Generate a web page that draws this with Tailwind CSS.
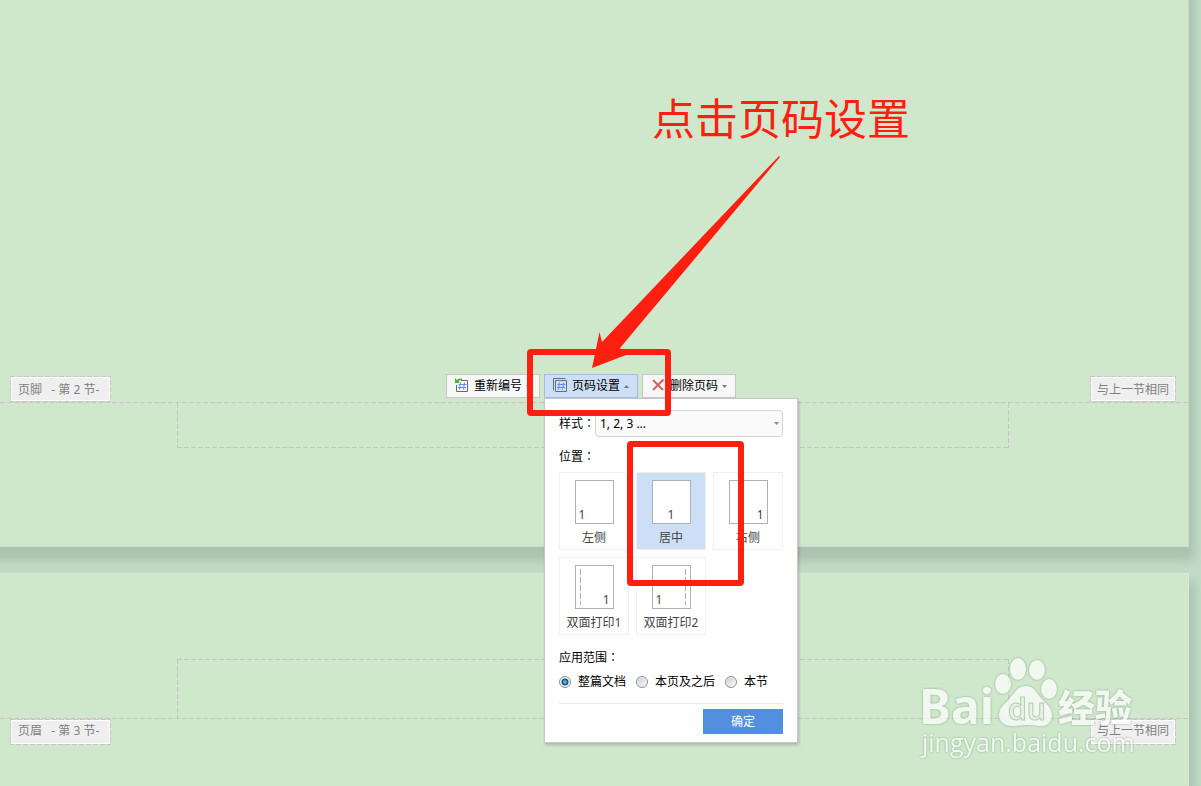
<!DOCTYPE html>
<html lang="zh-CN">
<head>
    <meta charset="UTF-8">
    <meta name="viewport" content="width=device-width, initial-scale=1.0">
    <title>页码设置</title>
    <script src="https://cdn.jsdelivr.net/npm/@tailwindcss/browser@4"></script>
</head>
<body class="bg-[#c2dcc7] font-['Noto_Sans','Noto_Sans_CJK_SC',sans-serif] text-xs text-black">
    <main class="relative flex min-h-screen flex-col overflow-hidden">

        <!-- Section 2 page, footer area -->
        <section class="-mt-6 -ml-6 mr-3 flex h-[571px] flex-col justify-end border-r border-b border-[#cfd8cf] bg-[#cfe8cc] pl-6 shadow-[6px_14px_10px_#abc2af]">
            <div class="grid grid-cols-[1fr_auto_1fr] items-end pr-3 pl-2.5">
                <div class="relative h-[26px] w-[101px] p-px">
                    <div class="h-full border border-white bg-[#efefef] px-1.5 leading-[23px] whitespace-pre text-[#808080]">页脚   - 第 2 节-</div>
                    <svg class="absolute inset-0 h-full w-full" fill="none" stroke="#c8c4c8" stroke-width="2" stroke-dasharray="5 2"><rect width="100%" height="100%" /></svg>
                </div>

                <!-- Page number toolbar -->
                <div class="mr-1 mb-1 flex gap-1">
                    <button class="flex h-6 w-[94px] items-center border border-[#c6c6c6] bg-[#f7f7f7] pl-[7px]">
                        <svg class="h-4 w-4" viewBox="0 0 16 16" fill="none">
                            <path d="M7 2.500h6.500v11h-11V7" stroke="#6b6b6b" />
                            <path d="M6.500 4.500l-1 7M10.500 4.500l-1 7M4.500 6.500h8M4 9.500h8" stroke="#5b8fe8" />
                            <path d="M1 0v5h5L4.500 3.500C5.500 2.300 6.500 2 8 2V.5C6 .5 4.500.8 3 2z" fill="#4caf2a" />
                        </svg>
                        <span class="ml-1">重新编号</span>
                        <svg class="ml-1 h-[3px] w-[5px]" viewBox="0 0 5 3" fill="#777"><path d="M0 0h5L2.500 3z" /></svg>
                    </button>
                    <div class="relative">
                        <button class="flex h-6 w-[94px] items-center border border-[#a3bfe8] bg-[#cddff7] pl-[7px]" aria-expanded="true">
                            <svg class="h-4 w-4" viewBox="0 0 16 16" fill="none">
                                <path d="M1.500 12.500v-12h12" stroke="#6b6b6b" />
                                <path d="M3.500 2.500h11v11h-11z" stroke="#6b6b6b" />
                                <path d="M7.500 4.500l-1 7M11.500 4.500l-1 7M5.500 6.500h8M5 9.500h8" stroke="#5b8fe8" />
                            </svg>
                            <span class="ml-1">页码设置</span>
                            <svg class="ml-1 h-[3px] w-[5px]" viewBox="0 0 5 3" fill="#777"><path d="M0 3h5L2.500 0z" /></svg>
                        </button>

                        <!-- Settings dropdown -->
                        <form class="absolute top-full left-0 z-10 w-[254px] border border-[#c6c6c6] bg-white px-3.5 pt-[11px] pb-2 shadow-[1px_2px_3px_#0003]">
                            <div class="flex items-center">
                                <label for="style" class="w-9 shrink-0 whitespace-nowrap">样式<span lang="zh-TW" class="font-['Noto_Sans_CJK_TC',sans-serif]">：</span></label>
                                <div class="relative flex-1">
                                    <select id="style" class="block h-[27px] w-full appearance-none rounded border border-[#d4d4d4] bg-[#fafafa] px-1">
                                        <option>1, 2, 3 ...</option>
                                    </select>
                                    <svg class="pointer-events-none absolute top-3 right-1 h-[3px] w-[5px]" viewBox="0 0 5 3" fill="#888"><path d="M0 0h5L2.500 3z" /></svg>
                                </div>
                            </div>

                            <p class="mt-2.5 leading-[18px]">位置<span lang="zh-TW" class="font-['Noto_Sans_CJK_TC',sans-serif]">：</span></p>
                            <div class="mt-1.5 grid grid-cols-3 gap-[7px] text-[#444]">
                                <button type="button" class="flex h-[78px] flex-col items-center border border-[#efefef] pt-[7px]">
                                    <span class="flex h-11 w-[39px] items-end border border-[#b0b0b0] bg-white px-[3px] leading-4">1</span>
                                    <span class="mt-1 leading-5">左侧</span>
                                </button>
                                <button type="button" class="flex h-[78px] flex-col items-center border border-[#efefef] bg-[#cddff7] pt-[7px]">
                                    <span class="flex h-11 w-[39px] items-end justify-center border border-[#b0b0b0] bg-white px-[3px] leading-4">1</span>
                                    <span class="mt-1 leading-5">居中</span>
                                </button>
                                <button type="button" class="flex h-[78px] flex-col items-center border border-[#efefef] pt-[7px]">
                                    <span class="flex h-11 w-[39px] items-end justify-end border border-[#b0b0b0] bg-white px-[3px] leading-4">1</span>
                                    <span class="mt-1 leading-5">右侧</span>
                                </button>
                                <button type="button" class="flex h-[78px] flex-col items-center border border-[#efefef] pt-[7px]">
                                    <span class="flex h-11 w-[39px] items-end justify-between border border-[#b0b0b0] bg-white px-[3px] leading-4">
                                        <svg class="mb-[3px] h-9 w-[3px]" stroke="#b0b0b0" stroke-dasharray="6 2"><path d="M1.500 0v36" /></svg>1
                                    </span>
                                    <span class="mt-1 leading-5">双面打印1</span>
                                </button>
                                <button type="button" class="flex h-[78px] flex-col items-center border border-[#efefef] pt-[7px]">
                                    <span class="flex h-11 w-[39px] items-end justify-between border border-[#b0b0b0] bg-white px-[3px] leading-4">
                                        1<svg class="mb-[3px] h-9 w-[3px]" stroke="#b0b0b0" stroke-dasharray="6 2"><path d="M1.500 0v36" /></svg>
                                    </span>
                                    <span class="mt-1 leading-5">双面打印2</span>
                                </button>
                            </div>

                            <fieldset class="mt-[13px]">
                                <legend class="leading-[18px]">应用范围<span lang="zh-TW" class="font-['Noto_Sans_CJK_TC',sans-serif]">：</span></legend>
                                <div class="mt-1.5 flex gap-2.5 leading-[18px] whitespace-nowrap">
                                    <label class="flex items-center gap-[7px]">
                                        <input type="radio" name="range" checked class="h-3 w-3 appearance-none rounded-full border border-[#8e8f8f] bg-[#eee] bg-[radial-gradient(circle,#4db8e8_0_1px,#12456b_3px,#f4f4f4_4px)]">整篇文档
                                    </label>
                                    <label class="flex items-center gap-[7px]">
                                        <input type="radio" name="range" class="h-3 w-3 appearance-none rounded-full border border-[#8e8f8f] bg-[linear-gradient(135deg,#c8ccd0,#fafafa)] shadow-[inset_0_0_0_1px_#f4f4f4]">本页及之后
                                    </label>
                                    <label class="flex items-center gap-[7px]">
                                        <input type="radio" name="range" class="h-3 w-3 appearance-none rounded-full border border-[#8e8f8f] bg-[linear-gradient(135deg,#c8ccd0,#fafafa)] shadow-[inset_0_0_0_1px_#f4f4f4]">本节
                                    </label>
                                </div>
                            </fieldset>

                            <div class="mt-3 flex justify-end border-t border-[#ebebeb] pt-[5px]">
                                <button type="button" class="h-[25px] w-20 bg-[#528fde] text-white">确定</button>
                            </div>
                        </form>
                    </div>
                    <button class="flex h-6 w-[94px] items-center border border-[#c6c6c6] bg-[#f7f7f7] pl-[7px]">
                        <svg class="h-4 w-4" viewBox="0 0 16 16" fill="none" stroke="#d9605c" stroke-width="2"><path d="M3 2l10 10M13.500 1.500L3 12" /></svg>
                        <span class="ml-1">删除页码</span>
                        <svg class="ml-1 h-[3px] w-[5px]" viewBox="0 0 5 3" fill="#777"><path d="M0 0h5L2.500 3z" /></svg>
                    </button>
                </div>

                <div class="relative h-[26px] w-[86px] justify-self-end p-px">
                    <div class="h-full border border-white bg-[#efefef] text-center leading-[23px] whitespace-nowrap text-[#808080]">与上一节相同</div>
                    <svg class="absolute inset-0 h-full w-full" fill="none" stroke="#c8c4c8" stroke-width="2" stroke-dasharray="5 2"><rect width="100%" height="100%" /></svg>
                </div>
            </div>
            <div class="h-px bg-[repeating-linear-gradient(90deg,#c8c4c8_0_5px,transparent_5px_7px)]"></div>
            <div class="mr-[179px] mb-[98px] ml-[177px]">
                <svg class="block h-[45px] w-full" fill="none" stroke="#c4c4c4" stroke-width="2" stroke-dasharray="5 2">
                    <line x1="0" y1="0" x2="0" y2="100%" />
                    <line x1="0" y1="100%" x2="100%" y2="100%" />
                    <line x1="100%" y1="0" x2="100%" y2="100%" />
                </svg>
            </div>
        </section>

        <!-- Section 3 page, header area -->
        <section class="mt-[26px] mr-3 -ml-6 flex-1 border-t border-r border-[#dde8da] bg-[#cfe8cc] pt-[85px] pl-6 shadow-[6px_8px_10px_#abc2af]">
            <div class="mr-[179px] ml-[177px]">
                <svg class="block h-[59px] w-full" fill="none" stroke="#c4c4c4" stroke-width="2" stroke-dasharray="5 2">
                    <line x1="0" y1="0" x2="0" y2="100%" />
                    <line x1="0" y1="0" x2="100%" y2="0" />
                    <line x1="100%" y1="0" x2="100%" y2="100%" />
                </svg>
            </div>
            <div class="h-px bg-[repeating-linear-gradient(90deg,#c8c4c8_0_5px,transparent_5px_7px)]"></div>
            <div class="flex justify-between pr-3 pl-2.5">
                <div class="relative h-[26px] w-[101px] p-px">
                    <div class="h-full border border-white bg-[#efefef] px-1.5 leading-5 whitespace-pre text-[#808080]">页眉   - 第 3 节-</div>
                    <svg class="absolute inset-0 h-full w-full" fill="none" stroke="#c8c4c8" stroke-width="2" stroke-dasharray="5 2"><rect width="100%" height="100%" /></svg>
                </div>
                <div class="relative h-[26px] w-[86px] p-px">
                    <div class="h-full border border-white bg-[#efefef] text-center leading-5 whitespace-nowrap text-[#808080]">与上一节相同</div>
                    <svg class="absolute inset-0 h-full w-full" fill="none" stroke="#c8c4c8" stroke-width="2" stroke-dasharray="5 2"><rect width="100%" height="100%" /></svg>
                </div>
            </div>
        </section>

        <!-- Watermark -->
        <svg class="absolute top-[650px] left-[915px] h-[115px] w-[230px] opacity-70 drop-shadow-[0_0_1px_#6f8f74]" viewBox="0 0 230 115" fill="#fff">
            <text x="4" y="74" font-family="Noto Sans" font-weight="700" font-size="48">Bai</text>
            <ellipse cx="88" cy="34" rx="8" ry="10" />
            <ellipse cx="103" cy="19" rx="8" ry="11" />
            <ellipse cx="122" cy="20" rx="8" ry="10" />
            <ellipse cx="134" cy="39" rx="8" ry="10" />
            <path d="M111 36c8 0 10 6 15 12s11 9 11 17-6 12-13 11-9-1-13-1-8 1-14 1-13-3-13-11 6-11 11-17 8-12 16-12z" />
            <text x="93" y="70" font-family="Noto Sans" font-weight="600" font-size="30" fill="#eef6ee" stroke="#a9c5aa" stroke-width="1">du</text>
            <text x="143" y="72" font-family="Noto Sans CJK SC" font-weight="900" font-size="37">经验</text>
            <text x="7" y="102" font-family="Open Sans, Noto Sans" font-size="25">jingyan.baidu.com</text>
        </svg>

        <!-- Annotations -->
        <p class="absolute top-[84px] left-[652px] z-20 font-['Noto_Sans_CJK_SC',sans-serif] text-[43px] leading-[64px] whitespace-nowrap text-[#ff1f10]">点击页码设置</p>
        <svg class="pointer-events-none absolute top-0 left-0 z-20 h-[600px] w-[800px]" viewBox="0 0 800 600" fill="none" stroke="#ff1f10" stroke-width="6" stroke-linejoin="round">
            <rect x="530" y="352" width="138" height="61" rx="1" />
            <rect x="630" y="444" width="111" height="139" rx="1" />
            <path d="M779 156L602 342L599.500 332L592 368L626 355L620 348L780 157z" fill="#ff1f10" stroke="none" />
        </svg>
    </main>
</body>
</html>
